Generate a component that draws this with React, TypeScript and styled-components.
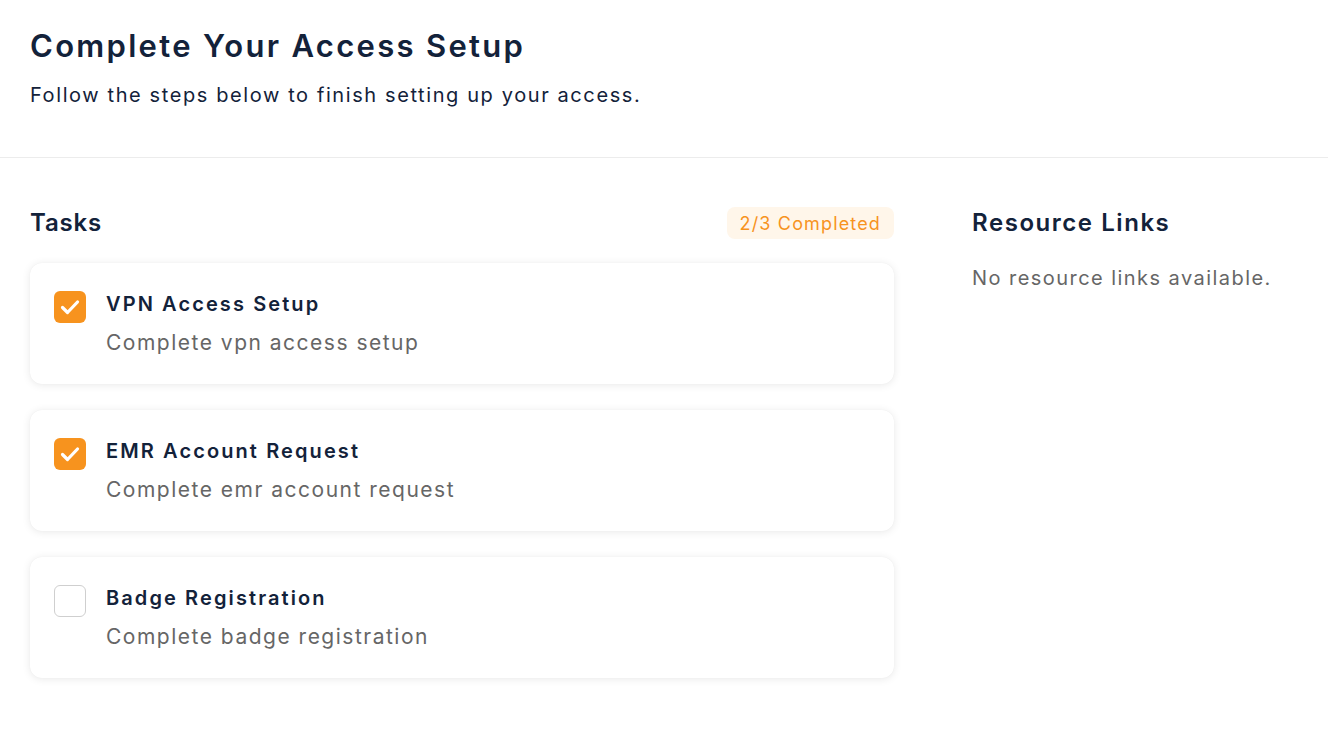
import * as React from 'react'
import styled, { createGlobalStyle } from 'styled-components'

const GlobalStyle = createGlobalStyle`
    html, body {
        margin: 0;
        padding: 0;
        background: #ffffff;
    }
    body {
        font-family: Inter, "Noto Sans", sans-serif;
        color: #13223a;
    }
`

const Page = styled.div`
    width: 100%;
    min-height: 738px;
    background: #ffffff;
`

const Header = styled.header`
    padding: 26px 30px 0 30px;
    height: 131px;
    border-bottom: 1px solid #ececec;
`

const Title = styled.h1`
    margin: 0;
    font-size: 31px;
    line-height: 40px;
    font-weight: 600;
    color: #13223a;
    letter-spacing: 2.3px;
`

const Subtitle = styled.p`
    margin: 15px 0 0 0;
    font-size: 20px;
    line-height: 28px;
    font-weight: 400;
    color: #13223a;
    letter-spacing: 1.6px;
`

const Content = styled.main`
    display: grid;
    grid-template-columns: 864px 1fr;
    column-gap: 78px;
    padding: 49px 30px 40px 30px;
`

const Column = styled.section`
    display: flex;
    flex-direction: column;
`

const SectionHead = styled.div`
    display: flex;
    align-items: center;
    justify-content: space-between;
    height: 32px;
    margin-bottom: 24px;
`

const SectionTitle = styled.h2<{ $spacing: number }>`
    margin: 0;
    font-size: 24px;
    line-height: 32px;
    font-weight: 600;
    color: #13223a;
    letter-spacing: ${p => p.$spacing}px;
`

const Badge = styled.span`
    display: inline-flex;
    align-items: center;
    height: 32px;
    padding: 0 13px;
    border-radius: 8px;
    background: #fff6ea;
    color: #f7931e;
    font-size: 18px;
    font-weight: 400;
    letter-spacing: 1.15px;
`

const TaskList = styled.div`
    display: flex;
    flex-direction: column;
    gap: 26px;
`

const Card = styled.div`
    display: flex;
    align-items: flex-start;
    gap: 20px;
    padding: 27px 24px 26px 24px;
    background: #ffffff;
    border-radius: 12px;
    box-shadow: 0 1px 8px rgba(0, 0, 0, 0.09), 0 0 1px rgba(0, 0, 0, 0.06);
`

const Box = styled.div<{ $checked: boolean }>`
    flex: 0 0 auto;
    width: 32px;
    height: 32px;
    margin-top: 1px;
    box-sizing: border-box;
    border-radius: 6px;
    display: flex;
    align-items: center;
    justify-content: center;
    background: ${p => (p.$checked ? '#f7931e' : '#ffffff')};
    border: ${p => (p.$checked ? 'none' : '1px solid #cfcfcf')};
`

const TaskText = styled.div`
    display: flex;
    flex-direction: column;
`

const TaskName = styled.div`
    font-size: 20px;
    line-height: 28px;
    font-weight: 600;
    color: #13223a;
    letter-spacing: 2.1px;
`

const TaskDesc = styled.div`
    margin-top: 10px;
    font-size: 21px;
    line-height: 30px;
    font-weight: 400;
    color: #666666;
    letter-spacing: 1.5px;
`

const Empty = styled.p`
    margin: 0;
    font-size: 20px;
    line-height: 30px;
    color: #666666;
    letter-spacing: 1.45px;
`

const Check = () => (
    <svg width="32" height="32" viewBox="0 0 32 32" fill="none">
        <path d="M8.5 16.5 L13.5 21.5 L23.5 11" stroke="#ffffff" strokeWidth="3.2" strokeLinecap="round" strokeLinejoin="round" />
    </svg>
)

const tasks = [
    { name: 'VPN Access Setup', desc: 'Complete vpn access setup', done: true },
    { name: 'EMR Account Request', desc: 'Complete emr account request', done: true },
    { name: 'Badge Registration', desc: 'Complete badge registration', done: false },
]

export default function App() {
    const doneCount = tasks.filter(t => t.done).length
    return (
        <Page>
            <GlobalStyle />
            <Header>
                <Title>Complete Your Access Setup</Title>
                <Subtitle>Follow the steps below to finish setting up your access.</Subtitle>
            </Header>
            <Content>
                <Column>
                    <SectionHead>
                        <SectionTitle $spacing={0.8}>Tasks</SectionTitle>
                        <Badge>{doneCount}/{tasks.length} Completed</Badge>
                    </SectionHead>
                    <TaskList>
                        {tasks.map(t => (
                            <Card key={t.name}>
                                <Box $checked={t.done}>{t.done && <Check />}</Box>
                                <TaskText>
                                    <TaskName>{t.name}</TaskName>
                                    <TaskDesc>{t.desc}</TaskDesc>
                                </TaskText>
                            </Card>
                        ))}
                    </TaskList>
                </Column>
                <Column>
                    <SectionHead>
                        <SectionTitle $spacing={1.55}>Resource Links</SectionTitle>
                    </SectionHead>
                    <Empty>No resource links available.</Empty>
                </Column>
            </Content>
        </Page>
    )
}
